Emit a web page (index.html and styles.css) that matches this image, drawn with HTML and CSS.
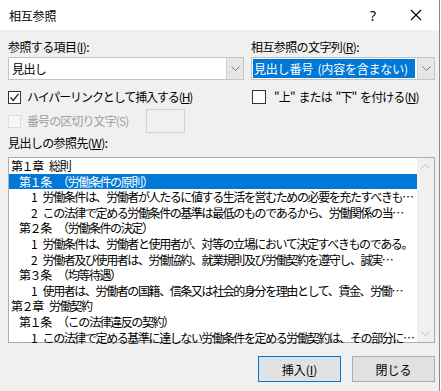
FILE: index.html
```html
<!DOCTYPE html>
<html lang="ja">
<head>
    <meta charset="UTF-8">
    <title>相互参照</title>
    <link rel="stylesheet" href="styles.css">
</head>
<body>
    <div class="dialog">
        <div class="titlebar">
            <span class="title">相互参照</span>
            <span class="help">?</span>
            <span class="close">
                <svg width="12" height="12" viewBox="0 0 12 12"><path d="M1 1L11 11M11 1L1 11" stroke="#000" stroke-width="1.1" fill="none"/></svg>
            </span>
        </div>

        <div class="content">
            <div class="top">
                <div class="col">
                    <div class="label">参照する項目(<u>I</u>):</div>
                    <div class="combo">
                        <span class="combo__text">見出し</span>
                        <span class="combo__btn">
                            <svg width="9" height="5" viewBox="0 0 9 5"><path d="M0.5 0.5L4.5 4.5L8.5 0.5" stroke="#7a7a7a" fill="none"/></svg>
                        </span>
                    </div>
                    <div class="check">
                        <span class="check__box">
                            <svg width="11" height="11" viewBox="0 0 11 11"><path d="M1.5 5.5L4.2 8.5L9.5 2" stroke="#222" stroke-width="1.2" fill="none"/></svg>
                        </span>
                        <span>ハイパーリンクとして挿入する(<u>H</u>)</span>
                    </div>
                    <div class="sep-row">
                        <div class="check check--disabled sep-label">
                            <span class="check__box"></span>
                            <span>番号の区切り文字(S)</span>
                        </div>
                        <span class="sep-input"></span>
                    </div>
                </div>

                <div class="col">
                    <div class="label">相互参照の文字列(<u>R</u>):</div>
                    <div class="combo">
                        <span class="combo__text combo__text--selected">見出し番号 (内容を含まない)</span>
                        <span class="combo__btn">
                            <svg width="9" height="5" viewBox="0 0 9 5"><path d="M0.5 0.5L4.5 4.5L8.5 0.5" stroke="#7a7a7a" fill="none"/></svg>
                        </span>
                    </div>
                    <div class="check check--spaced">
                        <span class="check__box"></span>
                        <span>"上" または "下" を付ける(<u>N</u>)</span>
                    </div>
                </div>
            </div>

            <div class="label label--list">見出しの参照先(<u>W</u>):</div>
            <div class="list">
                <div class="list__items">
                    <div class="item lvl0">第１章 総則</div>
                    <div class="item lvl1 selected">第１条 （労働条件の原則）</div>
                    <div class="item lvl2">1 労働条件は、労働者が人たるに値する生活を営むための必要を充たすべきも…</div>
                    <div class="item lvl2">2 この法律で定める労働条件の基準は最低のものであるから、労働関係の当…</div>
                    <div class="item lvl1">第２条 （労働条件の決定）</div>
                    <div class="item lvl2">1 労働条件は、労働者と使用者が、対等の立場において決定すべきものである。</div>
                    <div class="item lvl2">2 労働者及び使用者は、労働協約、就業規則及び労働契約を遵守し、誠実…</div>
                    <div class="item lvl1">第３条 （均等待遇）</div>
                    <div class="item lvl2">1 使用者は、労働者の国籍、信条又は社会的身分を理由として、賃金、労働…</div>
                    <div class="item lvl0">第２章 労働契約</div>
                    <div class="item lvl1">第１条 （この法律違反の契約）</div>
                    <div class="item lvl2">1 この法律で定める基準に達しない労働条件を定める労働契約は、その部分に…</div>
                </div>
                <div class="scrollbar">
                    <svg width="9" height="5" viewBox="0 0 9 5"><path d="M0.5 4.5L4.5 0.5L8.5 4.5" stroke="#c2c2c2" fill="none"/></svg>
                    <svg width="9" height="5" viewBox="0 0 9 5"><path d="M0.5 0.5L4.5 4.5L8.5 0.5" stroke="#c2c2c2" fill="none"/></svg>
                </div>
            </div>

            <div class="buttons">
                <button class="btn btn--default">挿入(<u>I</u>)</button>
                <button class="btn">閉じる</button>
            </div>
        </div>
    </div>
</body>
</html>
```

FILE: styles.css
```css
*, *::after, *::before {
    margin: 0;
    padding: 0;
    box-sizing: border-box;
}

body {
    width: 441px;
    height: 391px;
    overflow: hidden;
    background-color: #ffffff;
    font-family: "Noto Sans CJK JP", "Noto Sans", sans-serif;
    font-size: 12px;
    color: #000;
}

.dialog {
    width: 440px;
    height: 391px;
    border-right: 1px solid #8a8a8a;
    display: flex;
    flex-direction: column;
}

/* Title bar */
.titlebar {
    height: 30px;
    display: flex;
    align-items: center;
    padding-left: 9px;
    background-color: #ffffff;
}

.title {
    font-size: 12px;
    letter-spacing: -0.2px;
}

.help {
    margin-left: auto;
    margin-right: 34px;
    font-family: "Noto Sans", sans-serif;
    font-size: 14px;
}

.close {
    display: flex;
    margin-right: 17px;
}

/* Dialog body */
.content {
    flex: 1;
    background-color: #f0f0f0;
    padding: 9px 4px 0 8px;
}

.top {
    display: grid;
    grid-template-columns: 236px 184px;
    column-gap: 7px;
}

.label {
    height: 16px;
    line-height: 16px;
    margin-bottom: 2px;
    letter-spacing: -0.6px;
}

.label--list {
    margin-top: 2px;
    margin-bottom: 6px;
}

.combo {
    height: 23px;
    display: flex;
    background-color: #ffffff;
    border: 1px solid #c4c4c4;
}

.combo__text {
    flex: 1;
    padding-left: 3px;
    line-height: 21px;
    letter-spacing: -0.6px;
}

.combo__text--selected {
    margin: 1px 2px 1px 1px;
    padding-left: 1px;
    line-height: 19px;
    letter-spacing: -0.2px;
    word-spacing: 2px;
    background-color: #0078d7;
    color: #ffffff;
}

.combo__btn {
    width: 17px;
    display: flex;
    align-items: center;
    justify-content: center;
    background-color: #e6e6e6;
    border-left: 1px solid #d0d0d0;
}

/* Checkboxes */
.check {
    height: 16px;
    margin-top: 9px;
    display: flex;
    align-items: center;
    gap: 4px;
    line-height: 16px;
    letter-spacing: -1.1px;
}

.check--spaced {
    letter-spacing: -0.9px;
    word-spacing: 2px;
}

.check__box {
    width: 13px;
    height: 13px;
    border: 1px solid #333333;
    background-color: #ffffff;
    display: flex;
    align-items: center;
    justify-content: center;
    margin-right: 2px;
    margin-left: 0;
}

.col:last-child .check__box {
    margin-left: 1px;
    width: 14px;
    height: 14px;
    margin-right: 4px;
}

.check--disabled {
    color: #a0a0a0;
    letter-spacing: -0.9px;
}

.check--disabled .check__box {
    border-color: #dcdcdc;
    background-color: #f7f7f7;
}

.sep-row {
    display: flex;
    align-items: center;
    margin-top: 4px;
}

.sep-label {
    width: 138px;
    margin-top: 0;
}

.sep-input {
    width: 39px;
    height: 24px;
    border: 1px solid #d2d2d2;
    background-color: #f0f0f0;
}

/* Heading list */
.list {
    height: 186px;
    display: flex;
    background-color: #ffffff;
    border: 1px solid #acacac;
}

.list__items {
    flex: 1;
    min-width: 0;
}

.item {
    height: 15.6px;
    line-height: 15.6px;
    white-space: nowrap;
    overflow: hidden;
    text-overflow: ellipsis;
    letter-spacing: -1.4px;
    word-spacing: 5px;
}

.lvl0 { padding-left: 2px; }
.lvl1 { padding-left: 10px; }
.lvl2 { padding-left: 22px; }

.selected {
    background-color: #0078d7;
    color: #ffffff;
}

.scrollbar {
    width: 17px;
    display: flex;
    flex-direction: column;
    justify-content: space-between;
    align-items: center;
    padding: 6px 0 6px;
    background-color: #f0f0f0;
}

/* Buttons */
.buttons {
    display: flex;
    justify-content: flex-end;
    gap: 11px;
    margin-top: 13px;
}

.btn {
    width: 83px;
    height: 26px;
    font-family: "Noto Sans CJK JP", "Noto Sans", sans-serif;
    font-size: 12px;
    color: #000;
    background-color: #e1e1e1;
    border: 1px solid #adadad;
}

.btn--default {
    border-color: #0078d7;
}
```
